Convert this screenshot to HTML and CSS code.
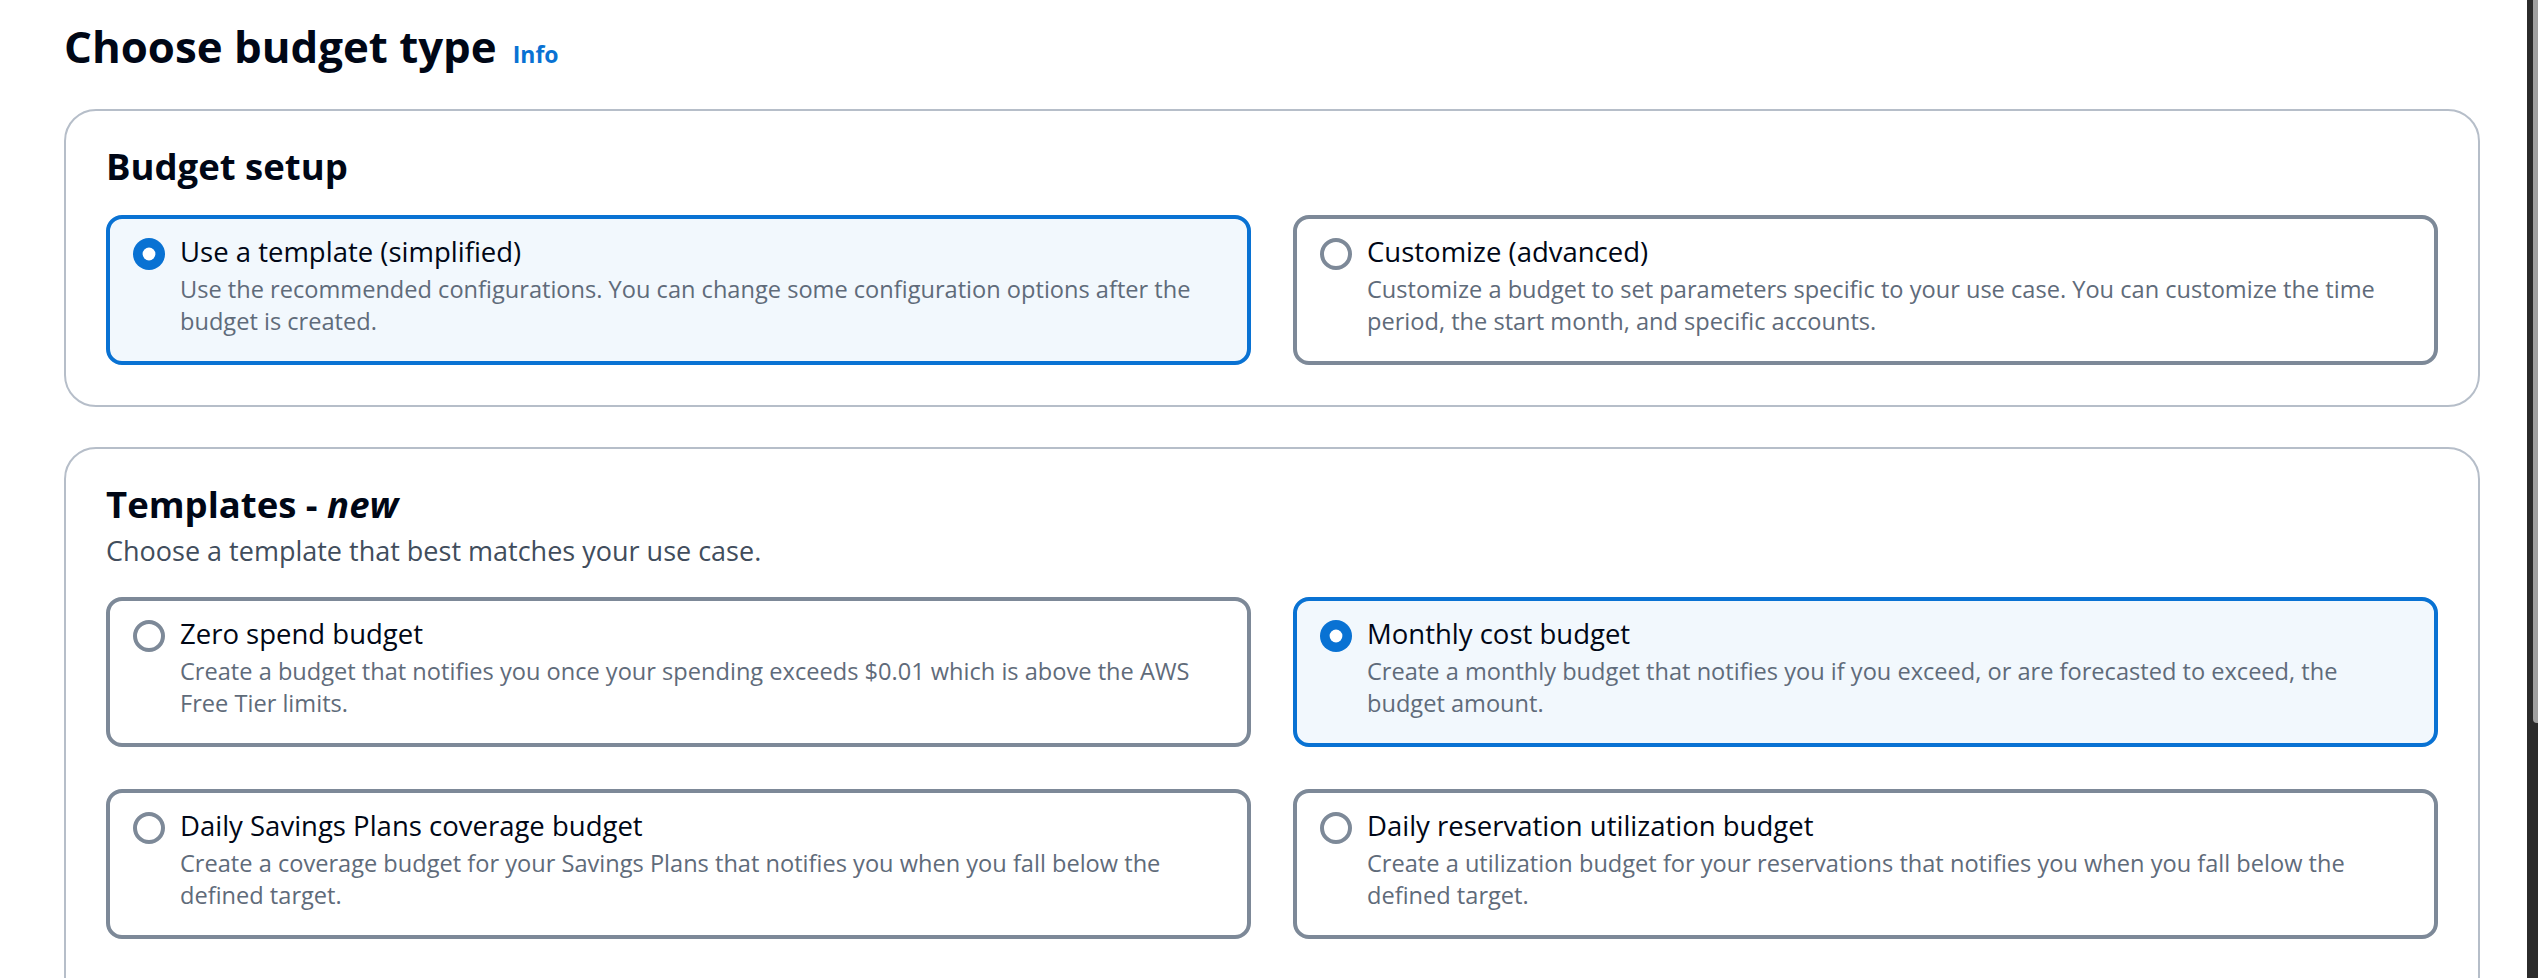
FILE: index.html
```html
<!DOCTYPE html>
<html lang="en">
<head>
<meta charset="utf-8">
<title>Choose budget type</title>
<link rel="stylesheet" href="styles.css">
</head>
<body>
<div class="page">
  <main class="main">
    <div class="page-header">
      <h1 class="page-title">Choose budget type</h1>
      <a class="info-link" href="#">Info</a>
    </div>

    <section class="container">
      <h2 class="container-title">Budget setup</h2>
      <div class="tiles">
        <label class="tile tile-selected">
          <span class="radio"><svg viewBox="0 0 32 32" width="32" height="32"><circle cx="16" cy="16" r="16" fill="#0972d3"/><circle cx="16" cy="16" r="6.4" fill="#ffffff"/></svg></span>
          <span class="tile-text">
            <span class="tile-label">Use a template (simplified)</span>
            <span class="tile-desc">Use the recommended configurations. You can change some configuration options after the budget is created.</span>
          </span>
        </label>
        <label class="tile">
          <span class="radio"><svg viewBox="0 0 32 32" width="32" height="32"><circle cx="16" cy="16" r="14" fill="#ffffff" stroke="#7d8998" stroke-width="4"/></svg></span>
          <span class="tile-text">
            <span class="tile-label">Customize (advanced)</span>
            <span class="tile-desc">Customize a budget to set parameters specific to your use case. You can customize the time period, the start month, and specific accounts.</span>
          </span>
        </label>
      </div>
    </section>

    <section class="container container-templates">
      <h2 class="container-title">Templates - <i>new</i></h2>
      <p class="container-desc">Choose a template that best matches your use case.</p>
      <div class="tiles">
        <label class="tile">
          <span class="radio"><svg viewBox="0 0 32 32" width="32" height="32"><circle cx="16" cy="16" r="14" fill="#ffffff" stroke="#7d8998" stroke-width="4"/></svg></span>
          <span class="tile-text">
            <span class="tile-label">Zero spend budget</span>
            <span class="tile-desc">Create a budget that notifies you once your spending exceeds $0.01 which is above the AWS Free Tier limits.</span>
          </span>
        </label>
        <label class="tile tile-selected">
          <span class="radio"><svg viewBox="0 0 32 32" width="32" height="32"><circle cx="16" cy="16" r="16" fill="#0972d3"/><circle cx="16" cy="16" r="6.4" fill="#ffffff"/></svg></span>
          <span class="tile-text">
            <span class="tile-label">Monthly cost budget</span>
            <span class="tile-desc">Create a monthly budget that notifies you if you exceed, or are forecasted to exceed, the budget amount.</span>
          </span>
        </label>
        <label class="tile">
          <span class="radio"><svg viewBox="0 0 32 32" width="32" height="32"><circle cx="16" cy="16" r="14" fill="#ffffff" stroke="#7d8998" stroke-width="4"/></svg></span>
          <span class="tile-text">
            <span class="tile-label">Daily Savings Plans coverage budget</span>
            <span class="tile-desc">Create a coverage budget for your Savings Plans that notifies you when you fall below the defined target.</span>
          </span>
        </label>
        <label class="tile">
          <span class="radio"><svg viewBox="0 0 32 32" width="32" height="32"><circle cx="16" cy="16" r="14" fill="#ffffff" stroke="#7d8998" stroke-width="4"/></svg></span>
          <span class="tile-text">
            <span class="tile-label">Daily reservation utilization budget</span>
            <span class="tile-desc">Create a utilization budget for your reservations that notifies you when you fall below the defined target.</span>
          </span>
        </label>
      </div>
    </section>
  </main>
  <div class="scrollbar"><div class="scroll-thumb"></div></div>
</div>
</body>
</html>
```

FILE: styles.css
```css
html, body {
  margin: 0;
  padding: 0;
  height: 100%;
  overflow: hidden;
  background: #ffffff;
}

body {
  font-family: "Open Sans", "Noto Sans", sans-serif;
  color: #000716;
}

.page {
  display: flex;
  height: 100vh;
}

.main {
  flex: 1;
  min-width: 0;
  padding: 20px 47px 0 64px;
}

.page-header {
  display: flex;
  align-items: baseline;
  gap: 16px;
  margin-bottom: 36.5px;
}

.page-title {
  margin: 0;
  font-size: 43.8px;
  line-height: 52px;
  font-weight: 700;
}

.info-link {
  font-size: 23px;
  font-weight: 700;
  color: #0972d3;
  text-decoration: none;
}

.container {
  border: 2px solid #b6bec9;
  border-radius: 32px;
  padding: 32px 40px 40px;
  margin-bottom: 40px;
}

.container-templates {
  padding-bottom: 120px;
}

.container-title {
  margin: 0 0 26.5px;
  font-size: 36.5px;
  line-height: 46px;
  font-weight: 700;
}

.container-templates .container-title {
  margin-bottom: 0;
}

.container-desc {
  margin: 4px 0 26px;
  font-size: 27px;
  line-height: 40px;
  color: #414d5c;
}

.tiles {
  display: grid;
  grid-template-columns: 1fr 1fr;
  gap: 42px;
}

.tile {
  display: flex;
  gap: 15px;
  border: 4px solid #7d8998;
  border-radius: 16px;
  padding: 13px 23px 24px;
  background: #ffffff;
}

.tile-selected {
  border-color: #0972d3;
  background: #f2f8fd;
}

.radio {
  flex: none;
  width: 32px;
  height: 32px;
  margin-top: 6px;
}

.radio svg {
  display: block;
}

.tile-text {
  display: flex;
  flex-direction: column;
}

.tile-label {
  font-size: 27.5px;
  line-height: 40px;
  color: #000716;
}

.tile-desc {
  margin-top: 1px;
  font-size: 23.6px;
  line-height: 32px;
  color: #5f6b7a;
}

.scrollbar {
  flex: none;
  width: 11px;
  background: #2b2b2b;
  display: flex;
  justify-content: flex-end;
}

.scroll-thumb {
  width: 5px;
  height: 723px;
  background: #a0a0a0;
  border-bottom-left-radius: 4px;
}
```
